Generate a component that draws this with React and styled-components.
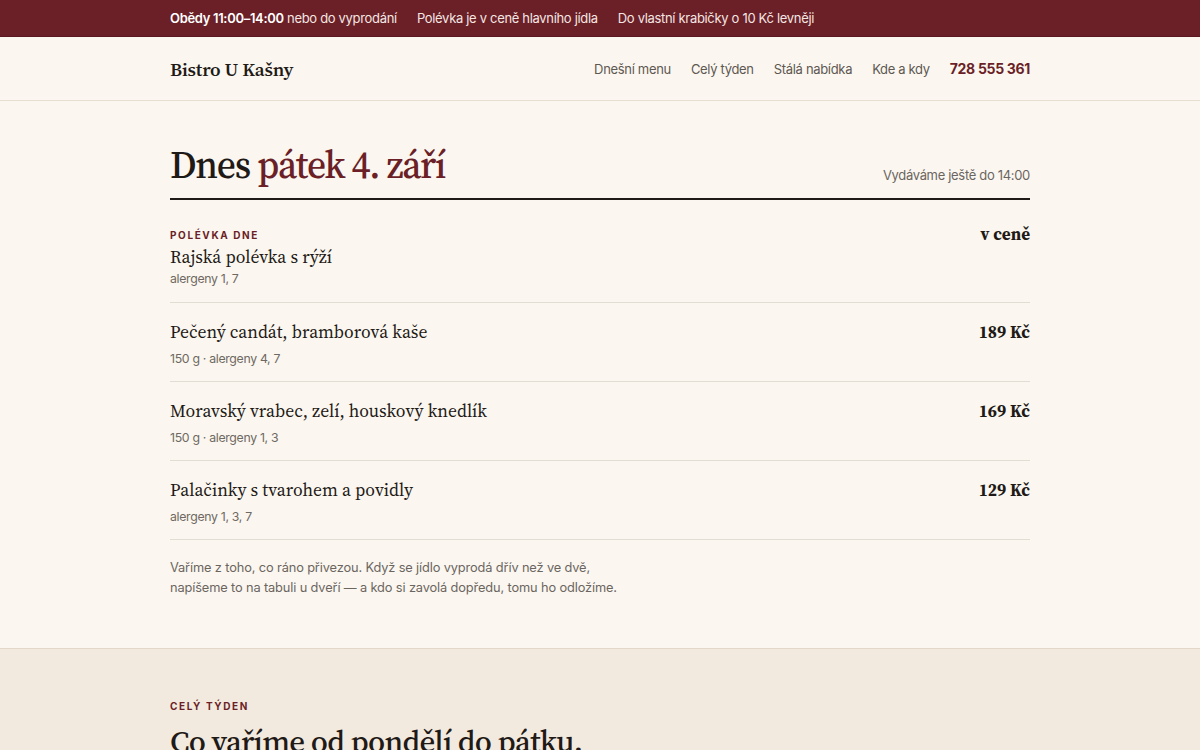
import React from "react";
import styled, { createGlobalStyle } from "styled-components";

const Global = createGlobalStyle`
  html, body { margin: 0; padding: 0; }
  body {
    background: #fbf7f0;
    color: #1f1a17;
    font-family: Inter, "Noto Sans", sans-serif;
    letter-spacing: -0.02em;
    -webkit-font-smoothing: antialiased;
  }
`;

const serif = `"Source Serif 4", "Source Serif Pro", "Liberation Serif", "DejaVu Serif", serif`;

const TopBar = styled.div`
  background: #6b1f27;
  color: #f3e6e2;
  font-size: 13px;
  height: 36px;
  border-bottom: 1px solid #5a1820;
`;

const Wrap = styled.div`
  width: 860px;
  margin: 0 auto;
`;

const TopInner = styled(Wrap)`
  display: flex;
  align-items: center;
  gap: 20px;
  height: 36px;
  b { font-weight: 600; color: #fff; }
`;

const Header = styled.header`
  border-bottom: 1px solid #e7ded2;
  height: 63px;
`;

const HeaderInner = styled(Wrap)`
  display: flex;
  align-items: center;
  justify-content: space-between;
  height: 63px;
`;

const Logo = styled.div`
  font-family: ${serif};
  font-size: 19px;
  font-weight: 600;
  letter-spacing: -0.01em;
  color: #1f1a17;
`;

const Nav = styled.nav`
  display: flex;
  align-items: center;
  gap: 20px;
  font-size: 13px;
  color: #5e5852;
`;

const Phone = styled.span`
  font-weight: 700;
  color: #6b1f27;
  font-size: 14px;
`;

const Today = styled.section`
  padding: 40px 0 50px;
  border-bottom: 1px solid #e3d7c9;
`;

const TitleRow = styled.div`
  display: flex;
  align-items: baseline;
  justify-content: space-between;
  border-bottom: 2px solid #1f1a17;
  padding-bottom: 9px;
`;

const Title = styled.h1`
  margin: 0;
  font-family: ${serif};
  font-weight: 500;
  font-size: 37.5px;
  letter-spacing: -0.035em;
  line-height: 48px;
  color: #1f1a17;
  span { color: #6b1f27; }
`;

const Until = styled.div`
  font-size: 13px;
  color: #6b6560;
  position: relative;
  top: 2px;
`;

const Item = styled.div`
  display: flex;
  justify-content: space-between;
  align-items: flex-start;
  padding: ${(p) => (p.$first ? "28px 0 14px" : "16px 0 13px")};
  border-bottom: 1px solid #e3dcd2;
`;

const Label = styled.div`
  font-size: 10px;
  line-height: 14px;
  font-weight: 700;
  letter-spacing: 0.16em;
  color: #6b1f27;
  text-transform: uppercase;
  margin-bottom: 2px;
`;

const Name = styled.div`
  font-family: ${serif};
  font-size: 17.6px;
  letter-spacing: 0;
  line-height: 26px;
  color: #1f1a17;
`;

const Meta = styled.div`
  font-size: 12.3px;
  line-height: 18px;
  color: #6f6962;
  margin-top: ${(p) => (p.$first ? "0" : "5px")};
`;

const Price = styled.div`
  font-family: ${serif};
  font-size: 17px;
  letter-spacing: 0;
  line-height: ${(p) => (p.$first ? "12px" : "26px")};
  font-weight: 700;
  color: #1f1a17;
  white-space: nowrap;
`;

const Note = styled.p`
  margin: 18px 0 0;
  width: 480px;
  font-size: 12.8px;
  letter-spacing: -0.01em;
  line-height: 20px;
  color: #6b6560;
`;

const Week = styled.section`
  background: #f3eadf;
  padding: 50px 0 40px;
`;

const Eyebrow = styled(Label)`
  margin-bottom: 8px;
`;

const WeekTitle = styled.h2`
  margin: 0;
  font-family: ${serif};
  font-weight: 500;
  font-size: 31px;
  letter-spacing: -0.025em;
  line-height: 40px;
  color: #1f1a17;
`;

const items = [
  { label: "Polévka dne", name: "Rajská polévka s rýží", meta: "alergeny 1, 7", price: "v ceně" },
  { name: "Pečený candát, bramborová kaše", meta: "150 g · alergeny 4, 7", price: "189 Kč" },
  { name: "Moravský vrabec, zelí, houskový knedlík", meta: "150 g · alergeny 1, 3", price: "169 Kč" },
  { name: "Palačinky s tvarohem a povidly", meta: "alergeny 1, 3, 7", price: "129 Kč" },
];

export default function App() {
  return (
    <>
      <Global />
      <TopBar>
        <TopInner>
          <span><b>Obědy 11:00–14:00</b> nebo do vyprodání</span>
          <span>Polévka je v ceně hlavního jídla</span>
          <span>Do vlastní krabičky o 10 Kč levněji</span>
        </TopInner>
      </TopBar>
      <Header>
        <HeaderInner>
          <Logo>Bistro U Kašny</Logo>
          <Nav>
            <span>Dnešní menu</span>
            <span>Celý týden</span>
            <span>Stálá nabídka</span>
            <span>Kde a kdy</span>
            <Phone>728 555 361</Phone>
          </Nav>
        </HeaderInner>
      </Header>
      <Today>
        <Wrap>
          <TitleRow>
            <Title>Dnes <span>pátek 4. září</span></Title>
            <Until>Vydáváme ještě do 14:00</Until>
          </TitleRow>
          {items.map((it, i) => (
            <Item key={i} $first={i === 0}>
              <div>
                {it.label && <Label>{it.label}</Label>}
                <Name>{it.name}</Name>
                <Meta $first={i === 0}>{it.meta}</Meta>
              </div>
              <Price $first={i === 0}>{it.price}</Price>
            </Item>
          ))}
          <Note>
            Vaříme z toho, co ráno přivezou. Když se jídlo vyprodá dřív než ve dvě,
            napíšeme to na tabuli u dveří — a kdo si zavolá dopředu, tomu ho odložíme.
          </Note>
        </Wrap>
      </Today>
      <Week>
        <Wrap>
          <Eyebrow>Celý týden</Eyebrow>
          <WeekTitle>Co vaříme od pondělí do pátku.</WeekTitle>
        </Wrap>
      </Week>
    </>
  );
}
